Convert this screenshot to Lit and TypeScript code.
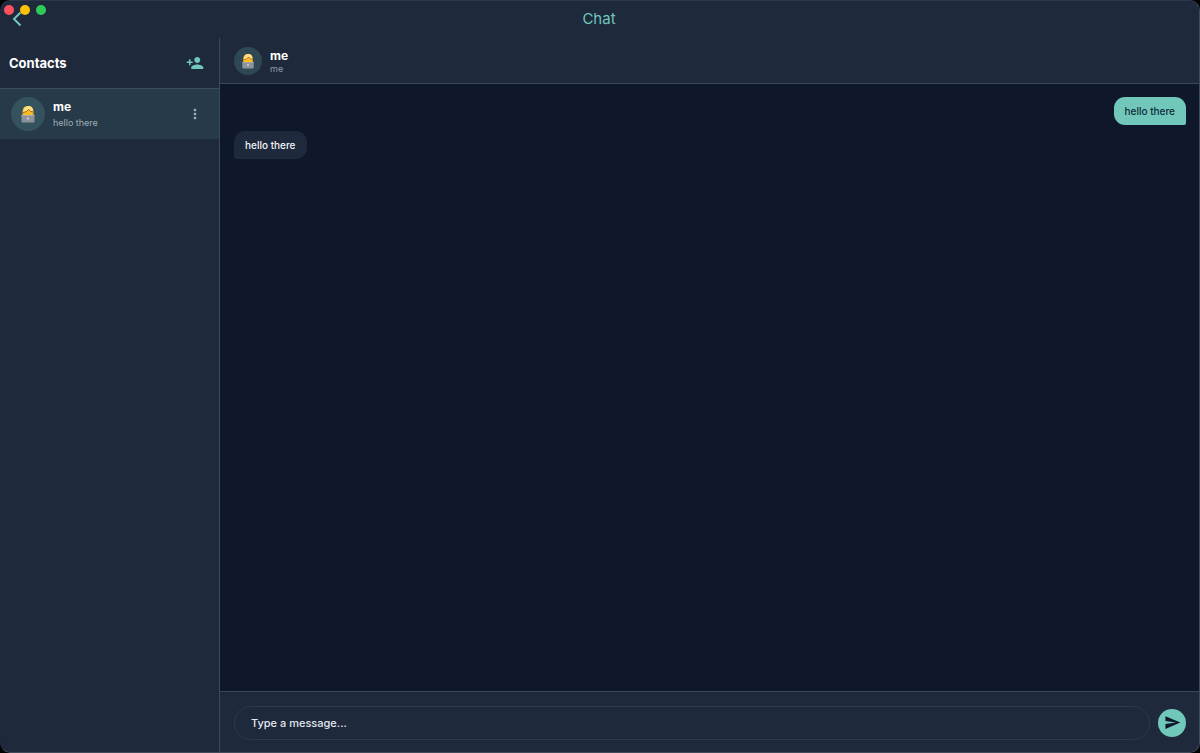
import { LitElement, html, css, svg } from "lit";
import { customElement, property, state } from "lit/decorators.js";

@customElement("user-avatar")
class UserAvatar extends LitElement {
  @property({ type: Boolean, reflect: true }) small = false;

  static styles = css`
    :host {
      display: flex;
      flex: none;
      align-items: center;
      justify-content: center;
      width: 34px;
      height: 34px;
      border-radius: 50%;
      background: #35535e;
    }
    :host([small]) {
      width: 28px;
      height: 28px;
      background: #2e4954;
    }
    svg {
      width: 16px;
      height: 18px;
    }
    :host([small]) svg {
      width: 14px;
      height: 16px;
    }
  `;

  render() {
    return html`<svg viewBox="0 0 32 36" aria-hidden="true">
      <path d="M5 21V14C5 6 9 2 16 2s11 4 11 12v7z" fill="#f5b51c" />
      <path d="M6 14C7 6 11 2 17 2c6 0 9 4 9 10-4 1-6-1-8-4-3 4-7 6-12 6z" fill="#fde089" />
      <path d="M7 14c5 0 8-2 10-5 2 3 5 4 8 4v8H7z" fill="#fbbd24" />
      <path d="M5 15c5 0 9-2 12-6 2 3 6 5 10 5" fill="none" stroke="#a8691c" stroke-width="2" />
      <path d="M3 20h26v13a2 2 0 0 1-2 2H5a2 2 0 0 1-2-2z" fill="#8e939b" />
      <path d="M3 20h26v2H3z" fill="#a7abb1" />
      <circle cx="16" cy="27" r="2.2" fill="#d3d6da" />
    </svg>`;
  }
}

interface Message {
  text: string;
  sent: boolean;
}

@customElement("app-root")
class AppRoot extends LitElement {
  @state() private messages: Message[] = [
    { text: "hello there", sent: true },
    { text: "hello there", sent: false },
  ];

  static styles = css`
    :host {
      display: block;
      height: 100vh;
      background: #000;
      color: #fff;
      font-family: Inter, "Liberation Sans", sans-serif;
      font-size: 10px;
      line-height: 16px;
    }
    * {
      box-sizing: border-box;
    }
    h1,
    h2,
    h3,
    p,
    ul {
      margin: 0;
      padding: 0;
    }
    ul {
      list-style: none;
    }
    button {
      display: flex;
      flex: none;
      align-items: center;
      justify-content: center;
      padding: 0;
      border: 0;
      background: none;
      color: #70c7ba;
      cursor: pointer;
    }
    .window {
      position: relative;
      display: flex;
      flex-direction: column;
      height: 100%;
      overflow: hidden;
      border-radius: 10px;
      background: #1e293b;
    }
    .window::after {
      content: "";
      position: absolute;
      inset: 0;
      border: 1px solid #3f4a5a;
      border-left-color: transparent;
      border-top-color: #2c3748;
      border-radius: 10px;
      pointer-events: none;
    }
    .lights {
      position: absolute;
      top: 5px;
      left: 4px;
      display: flex;
      gap: 6px;
    }
    .light {
      width: 10px;
      height: 10px;
      border-radius: 50%;
    }
    .close {
      background: #ff5160;
    }
    .minimize {
      background: #fdc108;
    }
    .zoom {
      background: #2fcb57;
    }
    .titlebar {
      display: grid;
      flex: none;
      grid-template-columns: 38px 1fr 40px;
      align-items: center;
      height: 38px;
    }
    .back {
      width: 34px;
      height: 38px;
    }
    .title {
      color: #70c7ba;
      font-size: 15px;
      line-height: 20px;
      font-weight: 400;
      text-align: center;
    }
    .body {
      display: grid;
      flex: 1;
      grid-template-columns: 220px 1fr;
      min-height: 0;
    }
    .sidebar {
      border-right: 1px solid #3c4858;
    }
    .contacts-header {
      display: flex;
      align-items: center;
      justify-content: space-between;
      height: 51px;
      padding: 0 15px 0 9px;
      border-bottom: 1px solid #3c4a5a;
    }
    .contacts-title {
      font-size: 13px;
      font-weight: 700;
    }
    .contact {
      display: flex;
      align-items: center;
      gap: 8px;
      height: 50px;
      padding: 0 15px 0 11px;
      background: #273a49;
    }
    .names {
      flex: 1;
      padding-top: 2px;
    }
    .name {
      font-size: 12px;
      font-weight: 700;
    }
    .detail {
      color: #8f9ba8;
      font-size: 9px;
    }
    .contact .detail {
      color: #a0aeb7;
    }
    .menu {
      width: 18px;
      height: 18px;
      color: #a3b1b8;
    }
    .chat {
      display: flex;
      flex-direction: column;
      min-width: 0;
    }
    .chat-header {
      display: flex;
      flex: none;
      align-items: center;
      gap: 8px;
      height: 46px;
      padding: 0 14px;
      border-bottom: 1px solid #3c4858;
    }
    .chat-header .name,
    .chat-header .detail {
      line-height: 13px;
    }
    .messages {
      display: flex;
      flex: 1;
      flex-direction: column;
      align-items: flex-start;
      gap: 6px;
      min-height: 0;
      padding: 13px 14px;
      overflow: auto;
      background: #0f172a;
    }
    .message {
      padding: 6px 11px;
      border-radius: 11px 11px 11px 2px;
      background: #1e293b;
      color: #f1f5f9;
      font-weight: 500;
    }
    .sent {
      align-self: flex-end;
      border-radius: 11px 11px 2px 11px;
      background: #70c7ba;
      color: #0f2c38;
    }
    .composer {
      display: flex;
      flex: none;
      align-items: center;
      gap: 8px;
      height: 62px;
      padding: 0 14px;
      border-top: 1px solid #3c4858;
    }
    .input {
      flex: 1;
      min-width: 0;
      height: 34px;
      padding: 0 16px;
      border: 1px solid #2e3b4c;
      border-radius: 17px;
      outline: none;
      background: transparent;
      color: #e2e8f0;
      font: inherit;
      font-size: 11px;
      font-weight: 500;
    }
    .input::placeholder {
      color: #e2e8f0;
      opacity: 1;
    }
    .send {
      width: 28px;
      height: 28px;
      border-radius: 50%;
      background: #70c7ba;
      color: #0f172a;
    }
  `;

  private send(event: Event) {
    event.preventDefault();
    const input = this.renderRoot.querySelector<HTMLInputElement>(".input");
    const text = input?.value.trim();
    if (!input || !text) return;
    this.messages = [...this.messages, { text, sent: true }];
    input.value = "";
  }

  private icon(path: string, size: number) {
    return html`<svg width=${size} height=${size} viewBox="0 0 24 24" fill="currentColor" aria-hidden="true">
      ${svg`<path d=${path} />`}
    </svg>`;
  }

  render() {
    return html`
      <div class="window">
        <header class="titlebar">
          <button class="back" aria-label="Back">
            <svg width="10" height="16" viewBox="0 0 10 16" fill="none" stroke="currentColor" stroke-width="2" aria-hidden="true">
              <path d="M8.500 1.500 2 8l6.500 6.500" />
            </svg>
          </button>
          <h1 class="title">Chat</h1>
        </header>
        <div class="body">
          <aside class="sidebar">
            <header class="contacts-header">
              <h2 class="contacts-title">Contacts</h2>
              <button aria-label="Add contact">
                ${this.icon("M15 12c2.210 0 4-1.790 4-4s-1.790-4-4-4-4 1.790-4 4 1.790 4 4 4zm-9-2V7H4v3H1v2h3v3h2v-3h3v-2H6zm9 4c-2.670 0-8 1.340-8 4v2h16v-2c0-2.660-5.330-4-8-4z", 18)}
              </button>
            </header>
            <ul>
              <li class="contact">
                <user-avatar></user-avatar>
                <div class="names">
                  <h3 class="name">me</h3>
                  <p class="detail">hello there</p>
                </div>
                <button class="menu" aria-label="Contact options">
                  ${this.icon("M12 8c1.100 0 2-.9 2-2s-.9-2-2-2-2 .9-2 2 .9 2 2 2zm0 2c-1.100 0-2 .9-2 2s.9 2 2 2 2-.9 2-2-.9-2-2-2zm0 6c-1.100 0-2 .9-2 2s.9 2 2 2 2-.9 2-2-.9-2-2-2z", 16)}
                </button>
              </li>
            </ul>
          </aside>
          <main class="chat">
            <header class="chat-header">
              <user-avatar small></user-avatar>
              <div class="names">
                <h2 class="name">me</h2>
                <p class="detail">me</p>
              </div>
            </header>
            <div class="messages">
              ${this.messages.map((m) => html`<p class="message ${m.sent ? "sent" : ""}">${m.text}</p>`)}
            </div>
            <form class="composer" @submit=${this.send}>
              <input class="input" aria-label="Message" placeholder="Type a message..." />
              <button class="send" aria-label="Send">
                ${this.icon("M2.010 21 23 12 2.010 3 2 10l15 2-15 2z", 17)}
              </button>
            </form>
          </main>
        </div>
        <div class="lights" aria-hidden="true">
          <span class="light close"></span>
          <span class="light minimize"></span>
          <span class="light zoom"></span>
        </div>
      </div>
    `;
  }
}
